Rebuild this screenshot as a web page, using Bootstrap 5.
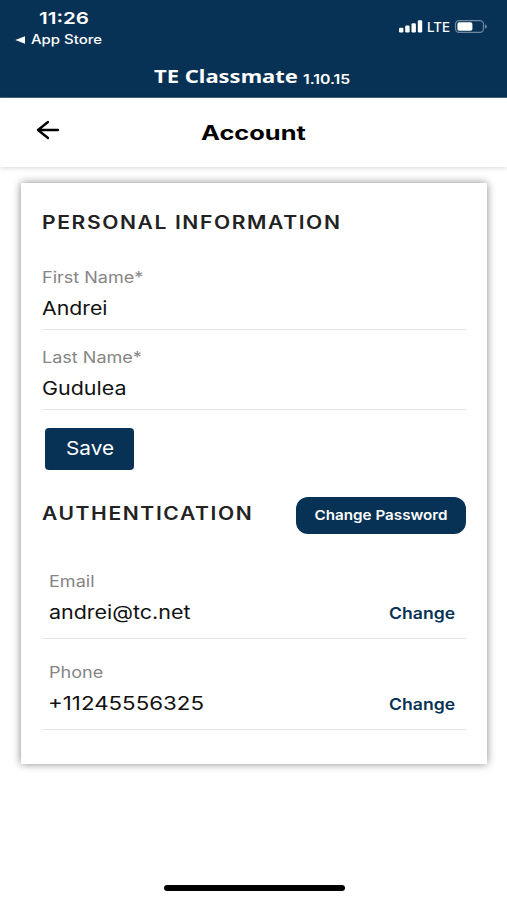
<!DOCTYPE html>
<html lang="en">
<head>
<meta charset="utf-8">
<meta name="viewport" content="width=device-width, initial-scale=1">
<title>Account</title>
<link href="https://cdn.jsdelivr.net/npm/bootstrap@5.3.0/dist/css/bootstrap.min.css" rel="stylesheet">
<style>
  :root { --navy: #083255; }
  body { font-family: Inter, "Liberation Sans", sans-serif; color: #111; height: 900px; overflow: hidden; }
  .tx { display: inline-block; white-space: nowrap; transform: scaleX(var(--sx, 1.15)); transform-origin: 0 50%; }
  .app-head { background: var(--navy); height: 98px; border-bottom: 1px solid #4a6680; }
  .status-left { width: 130px; padding-top: 8px; }
  .clock { --sx: 1.248; font-size: 16.5px; font-weight: 600; line-height: 21px; margin-left: 39px; }
  .back-app { line-height: 21px; padding-left: 15px; }
  .back-app .tx { --sx: 1.196; font-size: 12.5px; font-weight: 500; margin-left: 6px; }
  .status-right { padding: 17px 17px 0 0; height: 36px; }
  .lte { font-size: 13.3px; font-weight: 500; line-height: 20px; --sx: 1; margin-left: 3px; }
  .brand { line-height: 24px; margin-top: 14px; padding-left: 154px; }
  .brand-name { --sx: 1.222; font: 700 18px/24px "Noto Sans", sans-serif; width: 149px; }
  .brand-ver { --sx: 1.215; font-size: 13px; font-weight: 600; line-height: 30px; }
  .page-bar { height: 69px; box-shadow: 0 1px 5px rgba(0,0,0,.16); padding-left: 36px; background: #fff; }
  .back-arrow { margin-top: -6px; }
  .page-title { --sx: 1.27; font-size: 20px; font-weight: 700; line-height: 24px; color: #000; margin: 1px 0 0 141px; }
  .panel { margin: 16px 20px 0 21px; height: 581px; padding: 27px 21px 0; border: 0; border-radius: 1px; box-shadow: 0 0 8px rgba(0,0,0,.48); }
  .section-title { --sx: 1.17; font-size: 18px; font-weight: 600; letter-spacing: 1.37px; line-height: 25px; color: #222; margin: 0; }
  .field { border-bottom: 1px solid #e6e6e6; height: 80px; padding-top: 15px; }
  .field-first { margin-top: 15px; }
  .field-label { --sx: 1.127; font-size: 16px; line-height: 24px; color: #858585; display: table; }
  .field-value { --sx: 1.16; font-size: 18.5px; line-height: 30px; color: #111; display: table; margin-top: 4px; }
  .val-tight { --sx: 1.15; }
  .val-digits { --sx: 1.205; margin-left: -1px; }
  .auth-head { margin-top: 27px; margin-bottom: 14px; }
  .auth-head .section-title { margin-top: -4px; }
  .auth-row { height: 91px; padding: 0 11px 11px 7px; }
  .btn-navy { background: var(--navy); color: #fff; border: 0; padding: 0; }
  .btn-navy:hover { background: #0b416e; color: #fff; }
  .btn-save { width: 89px; height: 42px; border-radius: 4px; margin: 18px 0 0 3px; }
  .btn-save .tx { --sx: 1.092; font-size: 19px; transform-origin: 50% 50%; }
  .btn-pass { width: 170px; height: 37px; border-radius: 12px; padding-bottom: 4px; }
  .btn-pass .tx { --sx: 1.127; font-size: 13.5px; font-weight: 600; transform-origin: 50% 50%; }
  .change { --sx: 1.099; font-size: 16px; font-weight: 600; line-height: 24px; margin-bottom: 2px; color: var(--navy); transform-origin: 100% 50%; text-decoration: none; }
  .home-bar { width: 181px; height: 6px; border-radius: 3px; background: #000; margin: 121px 0 0 164px; }
</style>
</head>
<body class="bg-white">
<header class="app-head text-white">
  <div class="d-flex justify-content-between">
    <div class="status-left">
      <div class="d-flex"><span class="tx clock">11:26</span></div>
      <div class="back-app d-flex align-items-center">
        <svg width="10" height="8" viewBox="0 0 10 8"><path d="M.3 4 10 .2v7.6z" fill="#fff"/></svg>
        <span class="tx">App Store</span>
      </div>
    </div>
    <div class="status-right d-flex">
      <svg width="25" height="20" viewBox="0 0 25 20" fill="#fff">
        <rect x="0" y="10.8" width="4.4" height="4.6" rx="1.2"/><rect x="6.2" y="8.6" width="4.4" height="6.8" rx="1.2"/>
        <rect x="12.5" y="6.2" width="4.4" height="9.2" rx="1.2"/><rect x="18.8" y="3.3" width="4.4" height="12.1" rx="1.2"/>
      </svg>
      <span class="tx lte">LTE</span>
      <svg class="ms-1" width="36" height="20" viewBox="0 0 36 20">
        <rect x="1.5" y="3.6" width="28" height="11.8" rx="3.6" fill="none" stroke="#7088a0" stroke-width="1.2"/>
        <rect x="3.4" y="5.2" width="15" height="8.6" rx="1.8" fill="#fff"/>
        <path d="M31 7.2q4 2.3 0 4.6z" fill="#7088a0"/>
      </svg>
    </div>
  </div>
  <div class="brand d-flex">
    <span class="tx brand-name">TE Classmate</span><span class="tx brand-ver">1.10.15</span>
  </div>
</header>

<nav class="page-bar d-flex align-items-center">
  <svg class="back-arrow" width="24" height="20" viewBox="0 0 24 20" fill="none" stroke="#000" stroke-width="2.3" stroke-linecap="round" stroke-linejoin="round">
    <path d="M22 10H2M12 2 2 10l10 8"/>
  </svg>
  <h1 class="tx page-title">Account</h1>
</nav>

<main class="card panel">
  <div><h2 class="tx section-title">PERSONAL INFORMATION</h2></div>
  <div class="field field-first">
    <label class="tx field-label">First Name*</label>
    <span class="tx field-value val-tight">Andrei</span>
  </div>
  <div class="field">
    <label class="tx field-label">Last Name*</label>
    <span class="tx field-value">Gudulea</span>
  </div>
  <div><button class="btn btn-navy btn-save" type="button"><span class="tx">Save</span></button></div>
  <div class="auth-head d-flex justify-content-between align-items-center">
    <h2 class="tx section-title">AUTHENTICATION</h2>
    <button class="btn btn-navy btn-pass" type="button"><span class="tx">Change Password</span></button>
  </div>
  <div class="field auth-row d-flex justify-content-between align-items-end">
    <div><span class="tx field-label">Email</span><span class="tx field-value">andrei@tc.net</span></div>
    <a class="tx change" href="#">Change</a>
  </div>
  <div class="field auth-row d-flex justify-content-between align-items-end">
    <div><span class="tx field-label">Phone</span><span class="tx field-value val-digits">+11245556325</span></div>
    <a class="tx change" href="#">Change</a>
  </div>
</main>
<div class="home-bar"></div>
</body>
</html>
